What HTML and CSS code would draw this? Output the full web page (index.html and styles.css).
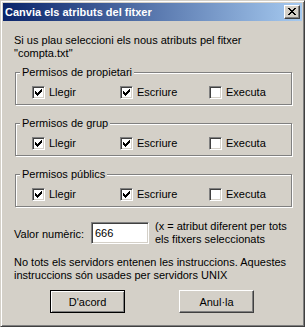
FILE: index.html
```html
<!DOCTYPE html>
<html lang="ca">
<head>
    <meta charset="UTF-8">
    <title>Canvia els atributs del fitxer</title>
    <link rel="stylesheet" href="styles.css">
</head>
<body>
    <div class="window">
        <div class="titlebar">
            <span class="title">Canvia els atributs del fitxer</span>
            <button class="close" type="button">
                <svg width="8" height="7" viewBox="0 0 8 7" shape-rendering="crispEdges">
                    <path d="M0 0h2v1h-2z M6 0h2v1h-2z M1 1h2v1h-2z M5 1h2v1h-2z M2 2h4v1h-4z M3 3h2v1h-2z M2 4h4v1h-4z M1 5h2v1h-2z M5 5h2v1h-2z M0 6h2v1h-2z M6 6h2v1h-2z" fill="#000"/>
                </svg>
            </button>
        </div>
        <div class="content">
            <p class="intro">Si us plau seleccioni els nous atributs pel fitxer<br>"compta.txt"</p>

            <div class="group">
                <div class="legend">Permisos de propietari</div>
                <div class="checks">
                    <label class="check"><span class="box"><svg width="7" height="7" viewBox="0 0 7 7" shape-rendering="crispEdges"><path d="M0 2h1v3h-1z M1 3h1v3h-1z M2 4h1v3h-1z M3 3h1v3h-1z M4 2h1v3h-1z M5 1h1v3h-1z M6 0h1v3h-1z"/></svg></span>Llegir</label>
                    <label class="check"><span class="box"><svg width="7" height="7" viewBox="0 0 7 7" shape-rendering="crispEdges"><path d="M0 2h1v3h-1z M1 3h1v3h-1z M2 4h1v3h-1z M3 3h1v3h-1z M4 2h1v3h-1z M5 1h1v3h-1z M6 0h1v3h-1z"/></svg></span>Escriure</label>
                    <label class="check"><span class="box"></span>Executa</label>
                </div>
            </div>

            <div class="group">
                <div class="legend">Permisos de grup</div>
                <div class="checks">
                    <label class="check"><span class="box"><svg width="7" height="7" viewBox="0 0 7 7" shape-rendering="crispEdges"><path d="M0 2h1v3h-1z M1 3h1v3h-1z M2 4h1v3h-1z M3 3h1v3h-1z M4 2h1v3h-1z M5 1h1v3h-1z M6 0h1v3h-1z"/></svg></span>Llegir</label>
                    <label class="check"><span class="box"><svg width="7" height="7" viewBox="0 0 7 7" shape-rendering="crispEdges"><path d="M0 2h1v3h-1z M1 3h1v3h-1z M2 4h1v3h-1z M3 3h1v3h-1z M4 2h1v3h-1z M5 1h1v3h-1z M6 0h1v3h-1z"/></svg></span>Escriure</label>
                    <label class="check"><span class="box"></span>Executa</label>
                </div>
            </div>

            <div class="group">
                <div class="legend">Permisos públics</div>
                <div class="checks">
                    <label class="check"><span class="box"><svg width="7" height="7" viewBox="0 0 7 7" shape-rendering="crispEdges"><path d="M0 2h1v3h-1z M1 3h1v3h-1z M2 4h1v3h-1z M3 3h1v3h-1z M4 2h1v3h-1z M5 1h1v3h-1z M6 0h1v3h-1z"/></svg></span>Llegir</label>
                    <label class="check"><span class="box"><svg width="7" height="7" viewBox="0 0 7 7" shape-rendering="crispEdges"><path d="M0 2h1v3h-1z M1 3h1v3h-1z M2 4h1v3h-1z M3 3h1v3h-1z M4 2h1v3h-1z M5 1h1v3h-1z M6 0h1v3h-1z"/></svg></span>Escriure</label>
                    <label class="check"><span class="box"></span>Executa</label>
                </div>
            </div>

            <div class="numrow">
                <span class="numlabel">Valor numèric:</span>
                <input class="num" type="text" value="666">
                <span class="note">(x = atribut diferent per tots<br>els fitxers seleccionats</span>
            </div>

            <p class="info">No tots els servidors entenen les instruccions. Aquestes<br>instruccions són usades per servidors UNIX</p>

            <div class="buttons">
                <button class="btn default" type="button">D'acord</button>
                <button class="btn" type="button">Anul·la</button>
            </div>
        </div>
    </div>
</body>
</html>
```

FILE: styles.css
```css
/* Classic dialog */
body {
    margin: 0;
    font-family: "Liberation Sans", Arial, sans-serif;
    font-size: 11px;
    color: #000;
    background-color: #d4d0c8;
}
.window {
    width: 305px;
    height: 327px;
    box-sizing: border-box;
    padding: 2px;
    background: #d4d0c8;
    border: 1px solid;
    border-color: #d4d0c8 #404040 #404040 #d4d0c8;
    box-shadow: inset 1px 1px #fff, inset -1px -1px #808080;
    display: flex;
    flex-direction: column;
}

/* Title bar */
.titlebar {
    height: 18px;
    display: flex;
    align-items: center;
    justify-content: space-between;
    padding: 0 2px 0 2px;
    background: linear-gradient(to right, #0a246a, #a6caf0);
}
.title {
    color: #fff;
    font-weight: bold;
    line-height: 13px;
}
.close {
    width: 16px;
    height: 14px;
    box-sizing: border-box;
    padding: 2px 0 0 3px;
    background: #d4d0c8;
    border: 1px solid;
    border-color: #fff #404040 #404040 #fff;
    box-shadow: inset -1px -1px #808080;
    display: flex;
    align-items: flex-start;
}

/* Body */
.content {
    padding: 13px 10px 0 11px;
    display: flex;
    flex-direction: column;
}
.intro, .info {
    margin: 0;
    line-height: 13px;
}

/* Group boxes */
.group {
    width: 277px;
    box-sizing: border-box;
    margin: 12px 0 0 1px;
    padding: 0 0 5px 0;
    border: 1px solid #808080;
    box-shadow: inset 1px 1px #fff, 1px 1px #fff;
    display: flex;
    flex-direction: column;
}
.group + .group {
    margin-top: 18px;
}
.legend {
    align-self: flex-start;
    margin: -7px 0 0 4px;
    padding: 0 2px;
    line-height: 13px;
    background: #d4d0c8;
}
.checks {
    margin-top: 7px;
    padding-left: 16px;
    display: grid;
    grid-template-columns: 88px 89px auto;
}
.check {
    display: flex;
    align-items: center;
    gap: 4px;
    line-height: 13px;
}
.box {
    width: 13px;
    height: 13px;
    box-sizing: border-box;
    padding: 2px;
    background: #fff;
    border: 1px solid;
    border-color: #808080 #fff #fff #808080;
    box-shadow: inset 1px 1px #404040, inset -1px -1px #d4d0c8;
}
.box svg {
    display: block;
}

/* Numeric value */
.numrow {
    margin-top: 13px;
    display: flex;
    align-items: flex-start;
}
.numlabel {
    width: 77px;
    margin-top: 8px;
    line-height: 13px;
}
.num {
    width: 58px;
    height: 22px;
    box-sizing: border-box;
    margin: 2px 0 0 0;
    padding: 0 3px;
    font: inherit;
    background: #fff;
    border: 1px solid;
    border-color: #808080 #fff #fff #808080;
    box-shadow: inset 1px 1px #404040, inset -1px -1px #d4d0c8;
    outline: none;
}
.note {
    margin-left: 6px;
    line-height: 13px;
}
.info {
    margin-top: 10px;
}

/* Buttons */
.buttons {
    margin-top: 8px;
    padding-left: 36px;
    display: flex;
    gap: 54px;
}
.btn {
    width: 75px;
    height: 23px;
    box-sizing: border-box;
    padding: 0;
    font: inherit;
    color: #000;
    background: #d4d0c8;
    border: 1px solid;
    border-color: #fff #404040 #404040 #fff;
    box-shadow: inset -1px -1px #808080;
}
.btn.default {
    border-color: #000;
    box-shadow: inset 1px 1px #fff, inset -1px -1px #808080;
}
```
